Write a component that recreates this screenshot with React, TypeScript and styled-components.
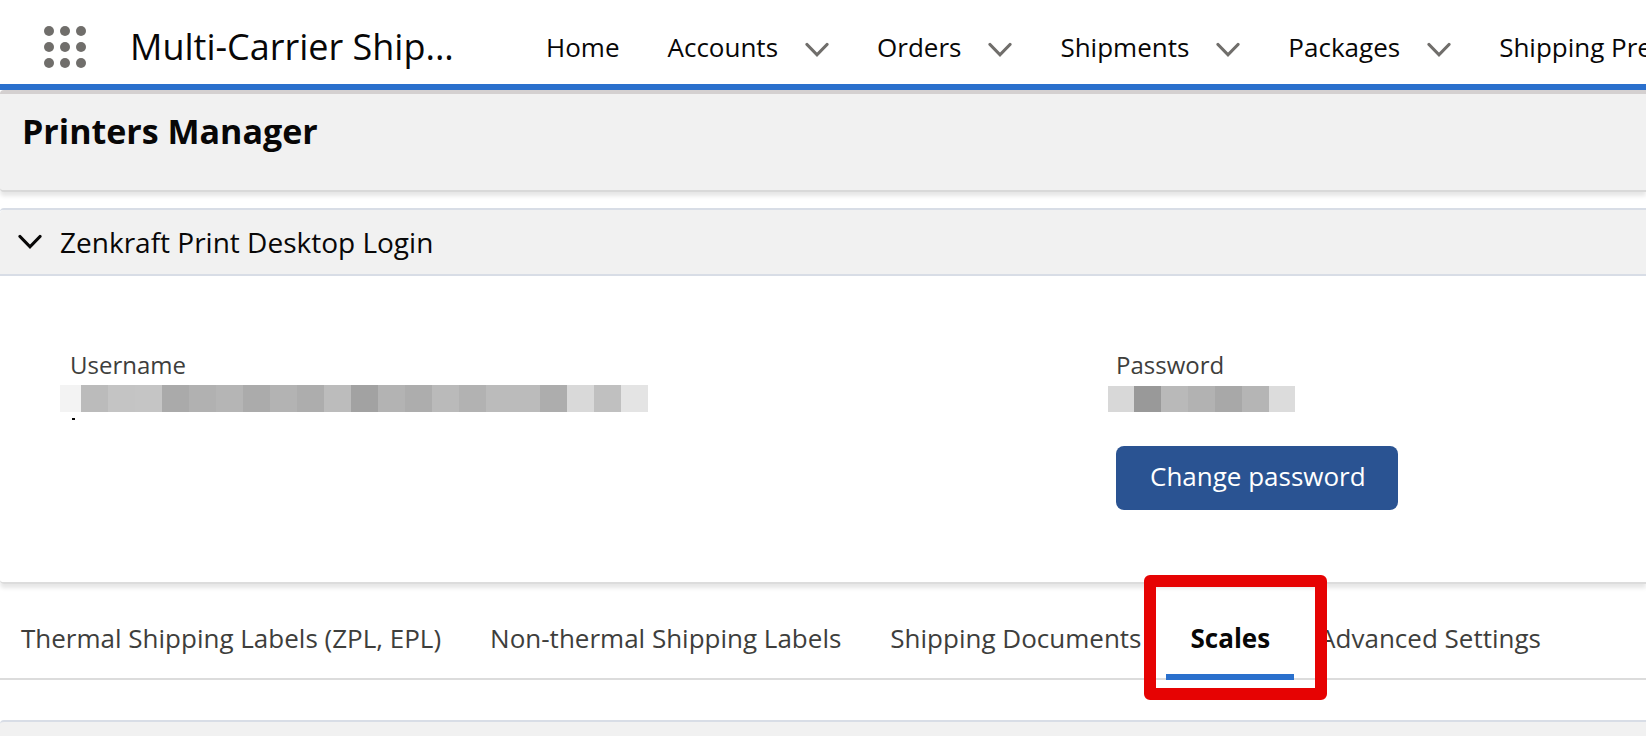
import React, { useState } from 'react';
import styled, { createGlobalStyle } from 'styled-components';

const GlobalStyle = createGlobalStyle`
  *, *::before, *::after { box-sizing: border-box; }
  body {
    margin: 0;
    background: #ffffff;
    color: #080707;
    font-family: "Open Sans", "Noto Sans", sans-serif;
    font-size: 26px;
    line-height: 36px;
  }
  button { font: inherit; color: inherit; border: 0; background: none; padding: 0; cursor: pointer; }
  h1, h2, dl, dd { margin: 0; font-weight: 400; }
`;

const Page = styled.div`
  display: flex;
  flex-direction: column;
  min-height: 100vh;
  overflow: hidden;
`;

const AppBar = styled.header`
  display: flex;
  align-items: center;
  height: 90px;
  padding: 10px 0 0 44px;
  border-bottom: 6px solid #2a70cd;
  overflow: hidden;
`;

const LauncherButton = styled.button`
  display: flex;
  flex: none;
  margin-right: 44px;
`;

const AppName = styled.div`
  flex: none;
  width: 416px;
  font-size: 36px;
  line-height: 48px;
  white-space: nowrap;
`;

const NavList = styled.nav`
  display: flex;
  flex: none;
  gap: 48px;
`;

const NavItem = styled.div`
  display: flex;
  align-items: center;
  gap: 27px;
`;

const NavLink = styled.a`
  color: inherit;
  text-decoration: none;
  white-space: nowrap;
`;

const IconButton = styled.button`
  display: flex;
  padding-top: 6px;
`;

const TitlePanel = styled.div`
  height: 102px;
  padding: 13px 22px;
  background: #f1f1f1;
  border-top: 4px solid #d4d0d0;
  border-bottom: 2px solid #d9d9d9;
  border-radius: 4px 0 0 4px;
  box-shadow: 0 4px 4px rgba(0, 0, 0, 0.1);
`;

const PageTitle = styled.h1`
  font-size: 34px;
  line-height: 48px;
  font-weight: 700;
`;

const Card = styled.section`
  margin-top: 16px;
  border-top: 2px solid #d8dde6;
  border-bottom: 2px solid #dcdcdc;
  border-radius: 4px 0 0 4px;
  box-shadow: 0 4px 4px rgba(0, 0, 0, 0.1);
`;

const CardHeader = styled.h2`
  height: 66px;
  background: #f1f1f1;
  border-bottom: 2px solid #d8dde6;
  border-radius: 4px 0 0 0;
`;

const SectionToggle = styled.button`
  display: flex;
  align-items: center;
  gap: 18px;
  width: 100%;
  height: 100%;
  padding-left: 18px;
  font-size: 28px;
  text-align: left;
`;

const Fields = styled.dl`
  display: grid;
  grid-template-columns: 2fr 1fr;
  min-height: 306px;
  padding: 71px 7px 71px 70px;
`;

const FieldLabel = styled.dt`
  height: 36px;
  font-size: 24px;
  color: #3e3e3c;
`;

const MaskedValue = styled.dd<{ $height: number }>`
  display: flex;
  height: ${(p) => p.$height}px;
  margin: ${(p) => 29 - p.$height}px 0 0 ${(p) => (p.$height === 27 ? -10 : -8)}px;
`;

const Pixel = styled.span<{ $shade: string; $width: number }>`
  flex: none;
  width: ${(p) => p.$width}px;
  background: ${(p) => p.$shade};
`;

const Mark = styled.div`
  width: 3px;
  height: 2px;
  margin: 6px 0 0 2px;
  background: #080707;
`;

const BrandButton = styled.button`
  height: 64px;
  margin-top: 34px;
  padding: 0 32px 4px 34px;
  border-radius: 8px;
  background: #2a5392;
  color: #ffffff;
`;

const TabBar = styled.div`
  display: flex;
  height: 96px;
  padding-top: 12px;
  border-bottom: 2px solid #dcdcdc;
`;

const TabList = styled.div`
  display: flex;
  gap: 1px;
  margin-left: -3px;
`;

const Tab = styled.button<{ $active: boolean }>`
  position: relative;
  flex: none;
  height: 84px;
  padding: 6px 24px 0;
  border-bottom: 6px solid ${(p) => (p.$active ? '#2a70cd' : 'transparent')};
  color: ${(p) => (p.$active ? '#080707' : '#3e3e3c')};
  font-weight: ${(p) => (p.$active ? 700 : 400)};
  white-space: nowrap;
`;

const Highlight = styled.span`
  position: absolute;
  z-index: 1;
  inset: -21px -33px -26px -22px;
  border: 12px solid #e60303;
  border-radius: 6px;
  pointer-events: none;
`;

const NextCard = styled.section`
  flex: 1;
  min-height: 16px;
  margin-top: 40px;
  border-top: 2px solid #d8dde6;
  border-radius: 4px 0 0 0;
  background: #f1f1f1;
`;

const Chevron = ({ color }: { color: string }) => (
  <svg width="24" height="16" viewBox="0 0 24 16" fill="none" aria-hidden="true">
    <path d="M2 2.5 12 12.8 22 2.5" stroke={color} strokeWidth="3.2" strokeLinecap="round" strokeLinejoin="miter" />
  </svg>
);

const Launcher = () => (
  <svg width="42" height="42" viewBox="0 0 42 42" fill="#706e6b" aria-hidden="true">
    {[5, 21, 37].map((y) => [5, 21, 37].map((x) => <circle key={`${x}-${y}`} cx={x} cy={y} r="5" />))}
  </svg>
);

const navItems = [
  { label: 'Home', menu: false },
  { label: 'Accounts', menu: true },
  { label: 'Orders', menu: true },
  { label: 'Shipments', menu: true },
  { label: 'Packages', menu: true },
  { label: 'Shipping Pre', menu: false },
];

const tabs = [
  'Thermal Shipping Labels (ZPL, EPL)',
  'Non-thermal Shipping Labels',
  'Shipping Documents',
  'Scales',
  'Advanced Settings',
];

const usernamePixels = [
  '#f3f3f3', '#bbbbbb', '#c4c4c4', '#c5c5c5', '#aaaaaa', '#b1b1b1', '#b5b5b5', '#ababab',
  '#b3b3b3', '#adadad', '#bcbcbc', '#a2a2a2', '#b3b3b3', '#adadad', '#bababa', '#b2b2b2',
  '#bbbbbb', '#bbbbbb', '#adadad', '#d9d9d9', '#c0c0c0', '#e4e4e4',
];
const passwordPixels = ['#d8d8d8', '#999999', '#b9b9b9', '#b2b2b2', '#a8a8a8', '#b5b5b5', '#dcdcdc'];

export default function App() {
  const [open, setOpen] = useState(true);
  const [active, setActive] = useState('Scales');

  return (
    <Page>
      <GlobalStyle />
      <AppBar>
        <LauncherButton aria-label="App Launcher"><Launcher /></LauncherButton>
        <AppName>Multi-Carrier Ship...</AppName>
        <NavList>
          {navItems.map((item) => (
            <NavItem key={item.label}>
              <NavLink href="#">{item.label}</NavLink>
              {item.menu && (
                <IconButton aria-label={`${item.label} menu`}><Chevron color="#706e6b" /></IconButton>
              )}
            </NavItem>
          ))}
        </NavList>
      </AppBar>
      <TitlePanel>
        <PageTitle>Printers Manager</PageTitle>
      </TitlePanel>
      <Card>
        <CardHeader>
          <SectionToggle aria-expanded={open} onClick={() => setOpen(!open)}>
            <Chevron color="#080707" />
            Zenkraft Print Desktop Login
          </SectionToggle>
        </CardHeader>
        {open && (
          <Fields>
            <div>
              <FieldLabel>Username</FieldLabel>
              <MaskedValue $height={27}>
                {usernamePixels.map((shade, i) => (
                  <Pixel key={i} $shade={shade} $width={i === 0 ? 21 : 27} />
                ))}
              </MaskedValue>
              <Mark />
            </div>
            <div>
              <FieldLabel>Password</FieldLabel>
              <MaskedValue $height={26}>
                {passwordPixels.map((shade, i) => (
                  <Pixel key={i} $shade={shade} $width={i === 0 || i === 6 ? 26 : 27} />
                ))}
              </MaskedValue>
              <BrandButton>Change password</BrandButton>
            </div>
          </Fields>
        )}
      </Card>
      <TabBar>
        <TabList role="tablist">
          {tabs.map((label) => (
            <Tab key={label} role="tab" aria-selected={active === label} $active={active === label} onClick={() => setActive(label)}>
              {label}
              {label === 'Scales' && <Highlight />}
            </Tab>
          ))}
        </TabList>
      </TabBar>
      <NextCard />
    </Page>
  );
}
